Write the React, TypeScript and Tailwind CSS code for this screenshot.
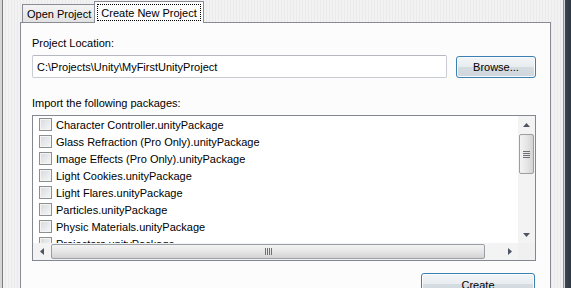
import React from "react";

const packages = [
  "Character Controller.unityPackage",
  "Glass Refraction (Pro Only).unityPackage",
  "Image Effects (Pro Only).unityPackage",
  "Light Cookies.unityPackage",
  "Light Flares.unityPackage",
  "Particles.unityPackage",
  "Physic Materials.unityPackage",
  "Projectors.unityPackage",
];

const Arrow = ({ dir }: { dir: "up" | "down" | "left" | "right" }) => {
  const pts = {
    up: "0,4 3.5,0 7,4",
    down: "0,0 3.5,4 7,0",
    left: "4,0 0,3.5 4,7",
    right: "0,0 4,3.5 0,7",
  }[dir];
  const vertical = dir === "up" || dir === "down";
  return (
    <svg width={vertical ? 7 : 4} height={vertical ? 4 : 7} viewBox={vertical ? "0 0 7 4" : "0 0 4 7"}>
      <polygon points={pts} fill="#4d5560" />
    </svg>
  );
};

const Checkbox = () => (
  <div className="w-[13px] h-[13px] shrink-0 border border-[#8e8f8f] bg-[linear-gradient(135deg,#d6d9de,#f7f7f7)] shadow-[inset_0_0_0_1px_#f4f4f4]" />
);

const VistaButton = ({ label, className }: { label: string; className: string }) => (
  <div
    className={
      "flex items-center justify-center rounded-[3px] border border-[#3c7fb1] shadow-[inset_0_0_0_1px_#f8fcff] bg-[linear-gradient(#f3f6f8_0%,#e8ecef_50%,#d6dde2_50%,#cfd6db_100%)] text-black " +
      className
    }
  >
    {label}
  </div>
);

export default function App() {
  return (
    <div className="flex w-[571px] h-[288px] overflow-hidden bg-[#f0f0f0] text-[11px] leading-[14px] text-black font-['Liberation_Sans',Arial,sans-serif]">
      {/* left window edge */}
      <div className="w-[2px] bg-[#d6d6d6]" />
      <div className="w-[1px] bg-[#7c7c7c]" />

      <div className="flex flex-col w-[560px] pl-[17px] pt-[1px] bg-[repeating-linear-gradient(90deg,#f2f2f2_0px,#f2f2f2_2px,#eaeaea_2px,#eaeaea_3px)]">
        {/* tabs */}
        <div className="relative z-10 flex items-end h-[21px] ml-[2px]">
          <div className="flex items-center w-[72px] h-[18px] pl-[4px] border-t border-l border-[#898c95] bg-[linear-gradient(#f4f4f4,#e2e2e2)]">
            Open Project
          </div>
          <div className="flex w-[110px] h-[22px] -mb-px p-[2px] border-t border-l border-r border-[#898c95] bg-[#fcfcfc]">
            <div className="flex flex-1 items-center justify-center border border-dotted border-black">
              Create New Project
            </div>
          </div>
        </div>

        {/* panel */}
        <div className="flex flex-col flex-1 w-[531px] border border-b-0 border-[#898c95] bg-[#fcfcfc] pl-[11px] pt-[13px]">
          <div>Project Location:</div>

          <div className="flex items-center mt-[5px]">
            <div className="flex items-center w-[415px] h-[23px] pl-[4px] rounded-[2px] border border-[#c9ccd3] border-t-[#b5b8bf] bg-white">
              C:\Projects\Unity\MyFirstUnityProject
            </div>
            <VistaButton label="Browse..." className="ml-[9px] w-[80px] h-[22px]" />
          </div>

          <div className="mt-[18px]">Import the following packages:</div>

          <div className="flex flex-col mt-[5px] w-[504px] h-[146px] border border-[#828790] bg-white">
            <div className="flex flex-1 min-h-0 overflow-hidden">
              <div className="flex-1 overflow-hidden">
                {packages.map((p) => (
                  <div key={p} className="flex items-center h-[17px] pl-[6px] whitespace-nowrap">
                    <Checkbox />
                    <span className="ml-[4px]">{p}</span>
                  </div>
                ))}
              </div>

              {/* vertical scrollbar */}
              <div className="flex flex-col items-center w-[17px] bg-[#f3f3f3]">
                <div className="flex items-center justify-center h-[17px] w-full">
                  <Arrow dir="up" />
                </div>
                <div className="flex flex-col items-center justify-center gap-[1px] mt-[1px] w-[15px] h-[40px] rounded-[2px] border border-[#9a9ea5] bg-[linear-gradient(90deg,#f3f3f3,#e6e6e6_50%,#d3d3d3)]">
                  <div className="w-[7px] h-[1px] bg-[#6c7079]" />
                  <div className="w-[7px] h-[1px] bg-[#6c7079]" />
                  <div className="w-[7px] h-[1px] bg-[#6c7079]" />
                  <div className="w-[7px] h-[1px] bg-[#6c7079]" />
                </div>
                <div className="flex-1" />
                <div className="flex items-center justify-center h-[17px] w-full">
                  <Arrow dir="down" />
                </div>
              </div>
            </div>

            {/* horizontal scrollbar */}
            <div className="flex h-[17px] bg-[#f3f3f3]">
              <div className="flex items-center justify-center w-[17px]">
                <Arrow dir="left" />
              </div>
              <div className="flex items-center justify-center gap-[1px] ml-[1px] w-[434px] h-[15px] mt-[1px] rounded-[2px] border border-[#9a9ea5] bg-[linear-gradient(#f3f3f3,#e6e6e6_50%,#d3d3d3)]">
                <div className="w-[1px] h-[7px] bg-[#6c7079]" />
                <div className="w-[1px] h-[7px] bg-[#6c7079]" />
                <div className="w-[1px] h-[7px] bg-[#6c7079]" />
                <div className="w-[1px] h-[7px] bg-[#6c7079]" />
              </div>
              <div className="flex-1" />
              <div className="flex items-center justify-center w-[17px]">
                <Arrow dir="right" />
              </div>
              <div className="w-[17px] bg-[#f0f0f0]" />
            </div>
          </div>

          <div className="flex justify-end w-[503px] mt-[12px]">
            <VistaButton label="Create" className="w-[114px] h-[23px]" />
          </div>
        </div>
      </div>

      {/* right window frame */}
      <div className="w-[1px] bg-[#8f949b]" />
      <div className="w-[1px] bg-[#d0d4d9]" />
      <div className="flex-1 bg-[linear-gradient(90deg,#3b4550,#2e3741)]" />
    </div>
  );
}
